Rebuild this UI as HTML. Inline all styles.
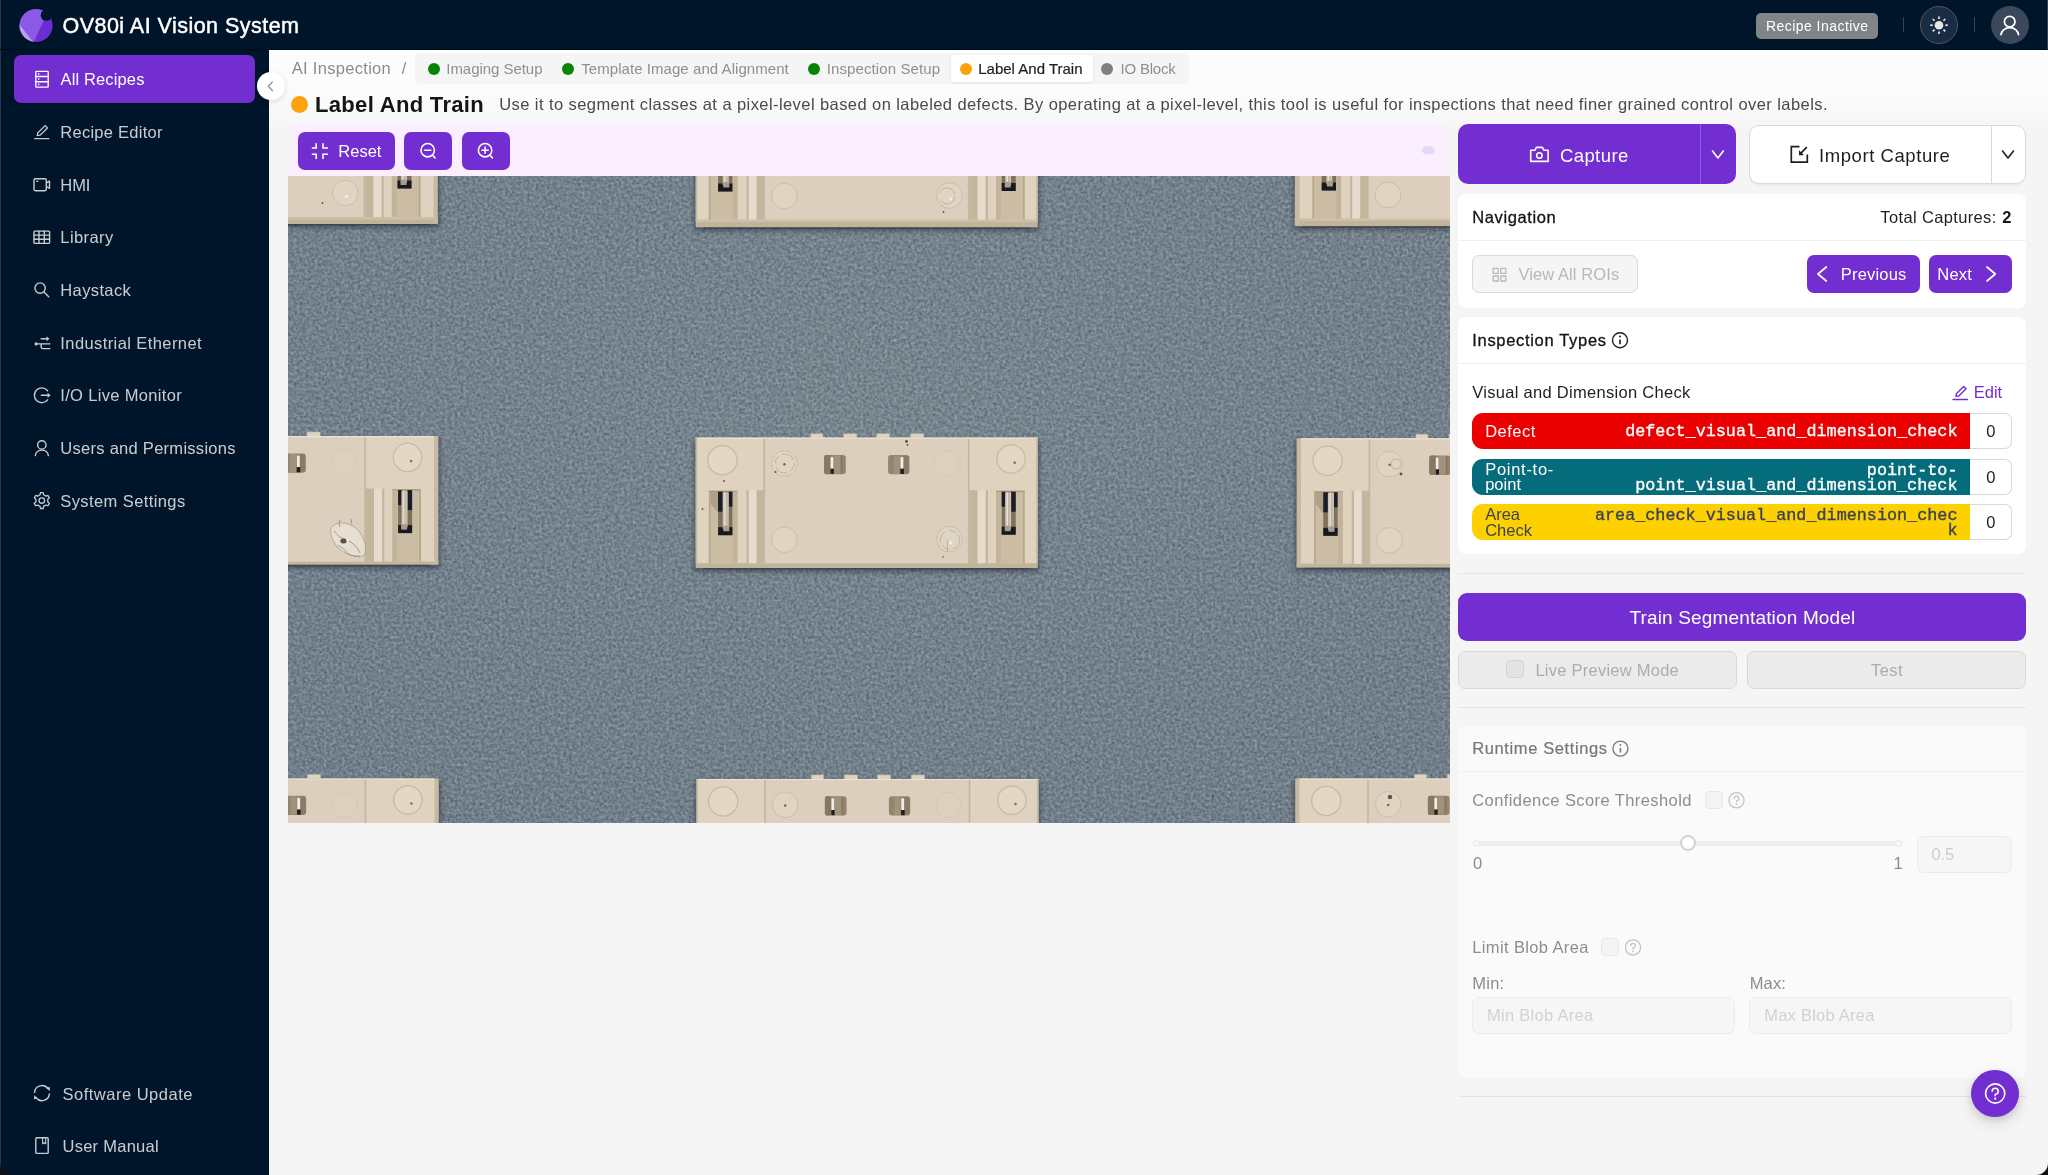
<!DOCTYPE html>
<html><head><meta charset="utf-8"><title>OV80i AI Vision System</title>
<style>
*{box-sizing:border-box;margin:0;padding:0}
html,body{width:2048px;height:1175px;overflow:hidden;background:#f5f5f5;font-family:"Liberation Sans",sans-serif}
.a{position:absolute}
.t{position:absolute;white-space:pre;line-height:1;font-family:"Liberation Sans",sans-serif}
.m{position:absolute;white-space:pre;line-height:1;font-family:"Liberation Mono",monospace}
.card{position:absolute;background:#fff;border-radius:8px}
.pbtn{position:absolute;background:#722ed1;border-radius:7px}
.dis{position:absolute;background:#ebebeb;border:1px solid #d9d9d9;border-radius:7px}
.cb{position:absolute;width:18px;height:18px;border-radius:4px;border:1px solid #d6d6d6;background:#e6e6e6}
.hr{position:absolute;height:1px;background:#e6e6e6}
</style></head><body>
<!-- page chrome -->
<div class="a" style="left:269px;top:50px;width:1779px;height:76px;background:linear-gradient(#fdfdfd,#fbfbfb 60%,#f6f6f6)"></div>
<div class="a" style="left:0;top:0;width:2048px;height:50px;background:#001529"></div>
<div class="a" style="left:0;top:50px;width:269px;height:1125px;background:#001529"></div>
<div class="a" style="left:0;top:0;width:1px;height:1175px;background:#27364a"></div>
<div class="a" style="left:0;top:49px;width:2048px;height:1px;background:#000a18"></div>
<div class="a" style="left:2047px;top:0;width:1px;height:49px;background:#334154"></div>
<!-- header widgets -->
<div class="a" style="left:1756px;top:13px;width:122px;height:26px;border-radius:5px;background:#808588"></div>
<div class="a" style="left:1903px;top:17px;width:1px;height:15px;background:#33445a"></div>
<div class="a" style="left:1974px;top:17px;width:1px;height:15px;background:#33445a"></div>
<div class="a" style="left:1920px;top:6px;width:38px;height:38px;border-radius:50%;background:#182c44;border:1px solid #5c5450"></div>
<div class="a" style="left:1990.5px;top:6px;width:38px;height:38px;border-radius:50%;background:#3b485b"></div>
<!-- sidebar -->
<div class="a" style="left:14px;top:55px;width:241px;height:48px;border-radius:7px;background:#722ed1"></div>
<div class="a" style="left:256.5px;top:72px;width:28px;height:28px;border-radius:50%;background:#fff;box-shadow:0 2px 6px rgba(0,0,0,.12)"></div>
<!-- tabs -->
<div class="a" style="left:415px;top:53px;width:774px;height:31px;border-radius:6px;background:#f5f5f5"></div>
<div class="a" style="left:950.5px;top:55px;width:142px;height:26.5px;border-radius:4px;background:#fff;box-shadow:0 1px 3px rgba(0,0,0,.08)"></div>
<div class="a" style="left:427.5px;top:63px;width:12px;height:12px;border-radius:50%;background:#088408"></div>
<div class="a" style="left:562px;top:63px;width:12px;height:12px;border-radius:50%;background:#088408"></div>
<div class="a" style="left:808.2px;top:63px;width:12px;height:12px;border-radius:50%;background:#088408"></div>
<div class="a" style="left:959.7px;top:63px;width:12px;height:12px;border-radius:50%;background:#fba30f"></div>
<div class="a" style="left:1101.4px;top:63px;width:12px;height:12px;border-radius:50%;background:#808080"></div>
<div class="a" style="left:291.2px;top:95.7px;width:17px;height:17px;border-radius:50%;background:#fba30f"></div>
<!-- toolbar -->
<div class="a" style="left:291px;top:124.5px;width:1152px;height:52px;background:#faeeff"></div>
<div class="pbtn" style="left:298px;top:132px;width:96.6px;height:38px"></div>
<div class="pbtn" style="left:404px;top:132px;width:48px;height:38px"></div>
<div class="pbtn" style="left:461.6px;top:132px;width:48.2px;height:38px"></div>
<svg class="a" style="left:288px;top:176px" width="1162" height="647" viewBox="288 176 1162 647">
<defs>
<filter id="nz" x="0" y="0" width="100%" height="100%" color-interpolation-filters="sRGB"><feTurbulence type="fractalNoise" baseFrequency="0.36" numOctaves="2" seed="7" result="n"/><feColorMatrix in="n" type="matrix" values="0 0 0 0 0.18  0 0 0 0 0.22  0 0 0 0 0.27  1.7 0 0 0 -0.6"/></filter>
<filter id="nz2" x="0" y="0" width="100%" height="100%" color-interpolation-filters="sRGB"><feTurbulence type="fractalNoise" baseFrequency="0.33" numOctaves="2" seed="23" result="n"/><feColorMatrix in="n" type="matrix" values="0 0 0 0 0.78  0 0 0 0 0.82  0 0 0 0 0.85  1.7 0 0 0 -0.62"/></filter>
<radialGradient id="bgg" cx="0.5" cy="0.35" r="0.8"><stop offset="0" stop-color="#78868f"/><stop offset="1" stop-color="#6f7d89"/></radialGradient>
<linearGradient id="pin" x1="0" x2="1"><stop offset="0" stop-color="#c0b6a6"/><stop offset=".4" stop-color="#e6e0d5"/><stop offset=".58" stop-color="#bdb3a3"/><stop offset="1" stop-color="#d4cbbd"/></linearGradient>
<filter id="sh" x="-5%" y="-10%" width="110%" height="125%"><feGaussianBlur stdDeviation="2.2"/></filter>
<g id="part">
 <path d="M115 0v-4h12v4M148 0v-4h13v4M181 0v-4h13v4M215 0v-4h13v4" fill="#ded3c1" stroke="#c6b8a1" stroke-width=".6"/>
 <rect x="0" y="0" width="342" height="125.5" fill="#dfd3c0"/>
 <rect x="68.5" y="0.5" width="204.5" height="125" fill="#dccfbd"/>
 <path d="M68.5 0V125.5M273 0V125.5" stroke="#c3b59e" stroke-width="1.6" fill="none"/>
 <path d="M0 .5H342" stroke="#ebe3d5" stroke-width="1.2"/>
 <g fill="#e3d8c6" stroke="#c8baa3" stroke-width="1.3">
  <circle cx="26.7" cy="22.5" r="14.6"/><circle cx="315.4" cy="21.3" r="14.2"/>
 </g>
 <g fill="#e0d4c3" stroke="#ccbfa9" stroke-width="1">
  <circle cx="88.7" cy="25.8" r="12.8"/><circle cx="88.7" cy="102" r="12.8"/><circle cx="253.8" cy="101.5" r="12.8"/><circle cx="252" cy="26" r="12.8" stroke="#d6cab7" fill="#ddd0bf"/>
 </g>
 <circle cx="88.7" cy="26.5" r="1.2" fill="#6d6253"/><circle cx="255" cy="105" r="1.6" fill="#f4efe6"/><circle cx="319" cy="25" r="1.3" fill="#7d7160"/>
 <g>
  <rect x="128.4" y="17.3" width="21.7" height="19.3" rx="3" fill="#94856e"/><rect x="128.4" y="17.3" width="6.4" height="19.3" rx="2" fill="#877862"/><rect x="138" y="18" width="7" height="18" fill="#a1927b"/><rect x="145" y="18" width="1.6" height="18" fill="#85765f"/>
  <rect x="134.9" y="19.3" width="2.7" height="12" rx="1" fill="#f4ede2"/><rect x="134.9" y="31" width="3.2" height="5.2" fill="#1c1e24"/>
  <rect x="192.4" y="17.3" width="21.3" height="19.3" rx="3" fill="#94856e"/><rect x="198" y="18" width="6" height="18" fill="#a1927b"/><rect x="208" y="18" width="5" height="18" rx="2" fill="#8a7b65"/>
  <rect x="204.8" y="19.3" width="2.8" height="12" rx="1" fill="#f4ede2"/><rect x="204.6" y="31" width="3.6" height="5.2" fill="#1c1e24"/>
 </g>
 <!-- left slot -->
 <rect x="13.2" y="53" width="28.6" height="72.5" fill="#cbbca4"/><rect x="13.2" y="53" width="28.6" height="1.4" fill="#a8977e"/><rect x="13.2" y="53" width="1.6" height="72.5" fill="#b5a58c"/>
 <path d="M14.8 54.4H22.4V75L14.8 66Z" fill="#a9987f" opacity=".8"/>
 <rect x="37" y="54" width="4.8" height="71.5" fill="#c3b39b"/>
 <rect x="22.4" y="54" width="14.3" height="43.5" fill="#7f705a"/>
 <rect x="22.4" y="54" width="4.6" height="20" fill="#1b1e28"/><rect x="33" y="54" width="3.7" height="15" fill="#1b1e28"/><rect x="22.4" y="89.5" width="14.3" height="8" fill="#171922"/>
 <rect x="27" y="54.5" width="6" height="37" rx="1.2" fill="url(#pin)"/><rect x="27.6" y="88" width="6" height="5.5" fill="#a99c88"/>
 <!-- ribs -->
 <rect x="50.8" y="52.5" width="2.3" height="73" fill="#c5b69f"/><rect x="53.1" y="52.5" width="7.8" height="73" rx="1" fill="#e6dccd"/><rect x="60.9" y="52.5" width="7.2" height="73" fill="#c4b59d"/>
 <rect x="273.8" y="52.5" width="8.2" height="73" fill="#c4b59d"/><rect x="282" y="52.5" width="8" height="73" rx="1" fill="#e6dccd"/><rect x="290" y="52.5" width="2.3" height="73" fill="#c5b69f"/>
 <!-- right slot -->
 <rect x="300.3" y="53" width="28.6" height="72.5" fill="#cbbca4"/><rect x="300.3" y="53" width="28.6" height="1.4" fill="#a8977e"/><rect x="327.3" y="53" width="1.6" height="72.5" fill="#b5a58c"/>
 <rect x="300.3" y="54" width="4.8" height="71.5" fill="#c3b39b"/>
 <rect x="306" y="54" width="14" height="43" fill="#7f705a"/>
 <rect x="306" y="54" width="3.4" height="15" fill="#1b1e28"/><rect x="315.4" y="54" width="4.6" height="20" fill="#1b1e28"/><rect x="306" y="89" width="14" height="8" fill="#171922"/>
 <rect x="309.4" y="54.5" width="6" height="37" rx="1.2" fill="url(#pin)"/><rect x="309" y="88" width="6" height="5.5" fill="#a99c88"/>
</g>
<clipPath id="pc"><rect x="288" y="176" width="1162" height="647"/></clipPath>
</defs>
<rect x="288" y="176" width="1162" height="647" fill="url(#bgg)"/>
<rect x="288" y="176" width="1162" height="647" filter="url(#nz)" opacity=".5"/>
<rect x="288" y="176" width="1162" height="647" filter="url(#nz2)" opacity=".45"/>
<g clip-path="url(#pc)">
<rect x="89.5" y="93.5" width="350.3" height="134.5" fill="#2b3642" opacity=".55" filter="url(#sh)"/>
<rect x="91.5" y="216.5" width="346.3" height="7.5" fill="#c2b39b"/>
<rect x="91.5" y="217.0" width="346.3" height="2.6" fill="#cdbfa8"/>
<rect x="433.0" y="91.5" width="4.8" height="131.5" fill="#c8b9a1"/>
<use href="#part" x="91.5" y="91.5"/>
<rect x="91.5" y="91.5" width="1.6" height="125.5" fill="#c7baa3"/>
<rect x="99.5" y="224.0" width="330.3" height="1.5" fill="#2c333b" opacity=".5"/>
<rect x="693.7" y="96" width="346.0" height="135.3" fill="#2b3642" opacity=".55" filter="url(#sh)"/>
<rect x="695.7" y="219.0" width="342.0" height="8.3" fill="#c2b39b"/>
<rect x="695.7" y="219.5" width="342.0" height="2.6" fill="#cdbfa8"/>
<use href="#part" x="695.7" y="94"/>
<rect x="695.7" y="94" width="1.6" height="125.5" fill="#c7baa3"/>
<rect x="1036.1" y="94" width="1.6" height="125.5" fill="#c7baa3"/>
<rect x="703.7" y="227.3" width="326.0" height="1.5" fill="#2c333b" opacity=".5"/>
<rect x="1292.8" y="95" width="350.5" height="135.2" fill="#2b3642" opacity=".55" filter="url(#sh)"/>
<rect x="1294.8" y="218.0" width="346.5" height="8.2" fill="#c2b39b"/>
<rect x="1294.8" y="218.5" width="346.5" height="2.6" fill="#cdbfa8"/>
<rect x="1294.8" y="93" width="5.0" height="132.2" fill="#c8b9a1"/>
<use href="#part" x="1299.3" y="93"/>
<rect x="1639.6999999999998" y="93" width="1.6" height="125.5" fill="#c7baa3"/>
<rect x="1302.8" y="226.2" width="330.5" height="1.5" fill="#2c333b" opacity=".5"/>
<rect x="90.1" y="438.1" width="350.30000000000007" height="130.70000000000005" fill="#2b3642" opacity=".55" filter="url(#sh)"/>
<rect x="92.1" y="561.1" width="346.30000000000007" height="3.7" fill="#c2b39b"/>
<rect x="433.6" y="436.1" width="4.8" height="127.69999999999999" fill="#c8b9a1"/>
<use href="#part" x="92.1" y="436.1"/>
<rect x="92.1" y="436.1" width="1.6" height="125.5" fill="#c7baa3"/>
<rect x="100.1" y="564.8000000000001" width="330.30000000000007" height="1.5" fill="#2c333b" opacity=".5"/>
<rect x="693.7" y="439.7" width="346.0" height="132.3" fill="#2b3642" opacity=".55" filter="url(#sh)"/>
<rect x="695.7" y="562.7" width="342.0" height="5.3" fill="#c2b39b"/>
<use href="#part" x="695.7" y="437.7"/>
<rect x="695.7" y="437.7" width="1.6" height="125.5" fill="#c7baa3"/>
<rect x="1036.1" y="437.7" width="1.6" height="125.5" fill="#c7baa3"/>
<rect x="703.7" y="568.0" width="326.0" height="1.5" fill="#2c333b" opacity=".5"/>
<rect x="1294.6000000000001" y="440.3" width="350.29999999999995" height="131.39999999999992" fill="#2b3642" opacity=".55" filter="url(#sh)"/>
<rect x="1296.6000000000001" y="563.3" width="346.29999999999995" height="4.4" fill="#c2b39b"/>
<rect x="1296.6000000000001" y="438.3" width="4.8" height="128.4" fill="#c8b9a1"/>
<use href="#part" x="1300.9" y="438.3"/>
<rect x="1641.3000000000002" y="438.3" width="1.6" height="125.5" fill="#c7baa3"/>
<rect x="1304.6000000000001" y="567.6999999999999" width="330.29999999999995" height="1.5" fill="#2c333b" opacity=".5"/>
<rect x="90.5" y="780.5" width="350.3" height="131.5" fill="#2b3642" opacity=".55" filter="url(#sh)"/>
<rect x="92.5" y="903.5" width="346.3" height="4.5" fill="#c2b39b"/>
<rect x="434.0" y="778.5" width="4.8" height="128.5" fill="#c8b9a1"/>
<use href="#part" x="92.5" y="778.5"/>
<rect x="92.5" y="778.5" width="1.6" height="125.5" fill="#c7baa3"/>
<rect x="100.5" y="908.0" width="330.3" height="1.5" fill="#2c333b" opacity=".5"/>
<rect x="694.5" y="781" width="346.0" height="131.5" fill="#2b3642" opacity=".55" filter="url(#sh)"/>
<rect x="696.5" y="904.0" width="342.0" height="4.5" fill="#c2b39b"/>
<use href="#part" x="696.5" y="779"/>
<rect x="696.5" y="779" width="1.6" height="125.5" fill="#c7baa3"/>
<rect x="1036.9" y="779" width="1.6" height="125.5" fill="#c7baa3"/>
<rect x="704.5" y="908.5" width="326.0" height="1.5" fill="#2c333b" opacity=".5"/>
<rect x="1293.2" y="780.5" width="350.29999999999995" height="131.5" fill="#2b3642" opacity=".55" filter="url(#sh)"/>
<rect x="1295.2" y="903.5" width="346.29999999999995" height="4.5" fill="#c2b39b"/>
<rect x="1295.2" y="778.5" width="4.8" height="128.5" fill="#c8b9a1"/>
<use href="#part" x="1299.5" y="778.5"/>
<rect x="1639.9" y="778.5" width="1.6" height="125.5" fill="#c7baa3"/>
<rect x="1303.2" y="908.0" width="330.29999999999995" height="1.5" fill="#2c333b" opacity=".5"/>
<g><path d="M331 527q8-6 17-3q10 3 14 12q5 9 3 18q-6 5-14 1q-9-2-15-10q-7-9-5-18z" fill="#e8e1d5" fill-opacity=".85" stroke="#7d7364" stroke-width=".8" stroke-opacity=".5"/><path d="M334 531q5 7 13 9q9 4 13 13M340 527q-2-4 0-7M351 524q1-3 0-5M338 545q6 3 10 9q6 3 12 2" fill="none" stroke="#6f6557" stroke-width=".8" opacity=".7"/><ellipse cx="343.5" cy="541" rx="3.2" ry="2.5" fill="#5a5145"/><circle cx="347.5" cy="540.3" r="1.2" fill="#f5f1e9"/></g>
<g fill="#5c5346"><circle cx="906.5" cy="441.5" r="1.4"/><circle cx="907.5" cy="445" r=".9"/><circle cx="724" cy="481" r=".9"/><circle cx="702.5" cy="509" r=".9"/><circle cx="943" cy="557" r=".8"/><circle cx="775.5" cy="472" r="1"/><circle cx="1401" cy="474" r="1.4"/><circle cx="322.5" cy="203" r=".9"/><circle cx="943.5" cy="212" r=".9"/><circle cx="1213" cy="796" r="1.2"/><circle cx="1390" cy="797" r="2.2"/></g>
<g fill="none" stroke="#8c806d" stroke-width=".8" opacity=".5"><circle cx="784.5" cy="463.5" r="9.5" stroke-dasharray="9 3 14 4"/><circle cx="950" cy="540" r="9.5" stroke-dasharray="12 4 8 3"/><circle cx="1396" cy="464" r="5" /><circle cx="947" cy="196" r="8" stroke-dasharray="20 8"/><path d="M947.5 540v12"/></g>
</g></svg>
<!-- right panel -->
<div class="pbtn" style="left:1457.6px;top:124.3px;width:278.3px;height:60px;border-radius:10px"></div>
<div class="a" style="left:1699.5px;top:124.3px;width:1px;height:60px;background:#8f58dd"></div>
<div class="a" style="left:1748.5px;top:124.5px;width:277.5px;height:59.5px;border-radius:10px;background:#fff;border:1px solid #d9d9d9;box-shadow:0 2px 0 rgba(0,0,0,.03)"></div>
<div class="a" style="left:1991px;top:125px;width:1px;height:58.5px;background:#d9d9d9"></div>
<div class="card" style="left:1457.6px;top:193.5px;width:568.8px;height:114px"></div>
<div class="hr" style="left:1457.6px;top:240px;width:568.8px;background:#f0f0f0"></div>
<div class="a" style="left:1472.3px;top:255.2px;width:165.7px;height:37.8px;border-radius:7px;background:#f5f5f5;border:1px solid #d9d9d9"></div>
<div class="pbtn" style="left:1806.9px;top:255.2px;width:113px;height:37.8px"></div>
<div class="pbtn" style="left:1929.3px;top:255.2px;width:82.9px;height:37.8px"></div>
<div class="card" style="left:1457.6px;top:317.4px;width:568.8px;height:236.5px"></div>
<div class="hr" style="left:1457.6px;top:363px;width:568.8px;background:#f0f0f0"></div>
<div class="a" style="left:1472px;top:413px;width:498px;height:36px;border-radius:11px 0 0 11px;background:#ea0000"></div>
<div class="a" style="left:1472px;top:458.6px;width:498px;height:36.2px;border-radius:11px 0 0 11px;background:#046c7b"></div>
<div class="a" style="left:1472px;top:504px;width:498px;height:36px;border-radius:11px 0 0 11px;background:#fdd000"></div>
<div class="a" style="left:1969.5px;top:413px;width:42.7px;height:36px;border-radius:0 7px 7px 0;background:#fff;border:1px solid #d9d9d9;border-left:none"></div>
<div class="a" style="left:1969.5px;top:458.6px;width:42.7px;height:36.2px;border-radius:0 7px 7px 0;background:#fff;border:1px solid #d9d9d9;border-left:none"></div>
<div class="a" style="left:1969.5px;top:504px;width:42.7px;height:36px;border-radius:0 7px 7px 0;background:#fff;border:1px solid #d9d9d9;border-left:none"></div>
<div class="hr" style="left:1457.6px;top:572.5px;width:568.8px"></div>
<div class="pbtn" style="left:1457.6px;top:593px;width:568.8px;height:47.6px;border-radius:9px"></div>
<div class="dis" style="left:1458px;top:650.5px;width:279px;height:38.2px"></div>
<div class="dis" style="left:1747px;top:650.5px;width:279.3px;height:38.2px"></div>
<div class="cb" style="left:1506.4px;top:660.3px;background:#e3e3e3;border-color:#d4d4d4"></div>
<div class="hr" style="left:1457.6px;top:707px;width:568.8px"></div>
<div class="card" style="left:1457.6px;top:725.8px;width:568.8px;height:351.8px;background:#fafafa"></div>
<div class="hr" style="left:1457.6px;top:771.3px;width:568.8px;background:#f1f1f1"></div>
<div class="cb" style="left:1704.6px;top:791.2px;background:#f4f4f4;border-color:#e8e8e8"></div>
<div class="cb" style="left:1601.2px;top:938.3px;background:#f4f4f4;border-color:#e8e8e8"></div>
<div class="a" style="left:1474px;top:841px;width:428px;height:5px;border-radius:3px;background:#ededed"></div>
<div class="a" style="left:1680px;top:835.3px;width:16px;height:16px;border-radius:50%;background:#fff;border:2.5px solid #d3d3d3"></div>
<div class="a" style="left:1916.5px;top:835.7px;width:95.7px;height:37.8px;border-radius:7px;background:#f6f6f6;border:1px solid #ebebeb"></div>
<div class="a" style="left:1472.3px;top:996.9px;width:262.6px;height:37.6px;border-radius:7px;background:#f6f6f6;border:1px solid #ebebeb"></div>
<div class="a" style="left:1749.4px;top:996.9px;width:262.6px;height:37.6px;border-radius:7px;background:#f6f6f6;border:1px solid #ebebeb"></div>
<div class="hr" style="left:1457.6px;top:1096px;width:568.8px;background:#e4e4e4"></div>
<div class="a" style="left:1971.4px;top:1069.7px;width:47.6px;height:47.6px;border-radius:50%;background:#722ed1;box-shadow:0 6px 16px rgba(0,0,0,.12),0 3px 6px rgba(0,0,0,.1)"></div>
<div class="a" style="left:0;top:0;width:2048px;height:1175px;will-change:transform">
<div class="t" style="left:62.50px;top:16px;font-size:21.5px;font-weight:400;color:#fff;letter-spacing:0.469px;-webkit-text-stroke:0.45px #fff;">OV80i AI Vision System</div>
<div class="t" style="left:1765.90px;top:19px;font-size:14px;font-weight:400;color:#fff;letter-spacing:0.463px;">Recipe Inactive</div>
<div class="t" style="left:60.50px;top:71px;font-size:16.5px;font-weight:400;color:#fff;letter-spacing:0.135px;">All Recipes</div>
<div class="t" style="left:60.30px;top:124px;font-size:16.5px;font-weight:400;color:rgba(255,255,255,0.78);letter-spacing:0.261px;">Recipe Editor</div>
<div class="t" style="left:60.30px;top:177px;font-size:16.5px;font-weight:400;color:rgba(255,255,255,0.78);letter-spacing:-0.075px;">HMI</div>
<div class="t" style="left:60.30px;top:229px;font-size:16.5px;font-weight:400;color:rgba(255,255,255,0.78);letter-spacing:0.410px;">Library</div>
<div class="t" style="left:60.30px;top:282px;font-size:16.5px;font-weight:400;color:rgba(255,255,255,0.78);letter-spacing:0.377px;">Haystack</div>
<div class="t" style="left:60.30px;top:335px;font-size:16.5px;font-weight:400;color:rgba(255,255,255,0.78);letter-spacing:0.410px;">Industrial Ethernet</div>
<div class="t" style="left:60.30px;top:387px;font-size:16.5px;font-weight:400;color:rgba(255,255,255,0.78);letter-spacing:0.329px;">I/O Live Monitor</div>
<div class="t" style="left:60.30px;top:440px;font-size:16.5px;font-weight:400;color:rgba(255,255,255,0.78);letter-spacing:0.278px;">Users and Permissions</div>
<div class="t" style="left:60.30px;top:493px;font-size:16.5px;font-weight:400;color:rgba(255,255,255,0.78);letter-spacing:0.406px;">System Settings</div>
<div class="t" style="left:62.50px;top:1086px;font-size:16.5px;font-weight:400;color:rgba(255,255,255,0.78);letter-spacing:0.500px;">Software Update</div>
<div class="t" style="left:62.50px;top:1138px;font-size:16.5px;font-weight:400;color:rgba(255,255,255,0.78);letter-spacing:0.255px;">User Manual</div>
<div class="t" style="left:291.75px;top:60px;font-size:16.5px;font-weight:400;color:#8c8c8c;letter-spacing:0.301px;">AI Inspection</div>
<div class="t" style="left:401.70px;top:60px;font-size:16.5px;font-weight:400;color:#8c8c8c;letter-spacing:0.000px;">/</div>
<div class="t" style="left:446.25px;top:61px;font-size:15px;font-weight:400;color:#8f8f8f;letter-spacing:-0.040px;">Imaging Setup</div>
<div class="t" style="left:581.25px;top:61px;font-size:15px;font-weight:400;color:#8f8f8f;letter-spacing:0.057px;">Template Image and Alignment</div>
<div class="t" style="left:826.75px;top:61px;font-size:15px;font-weight:400;color:#8f8f8f;letter-spacing:0.100px;">Inspection Setup</div>
<div class="t" style="left:978.25px;top:61px;font-size:15px;font-weight:400;color:#1f1f1f;letter-spacing:0.000px;-webkit-text-stroke:0.2px #1f1f1f;">Label And Train</div>
<div class="t" style="left:1120.50px;top:61px;font-size:15px;font-weight:400;color:#8f8f8f;letter-spacing:-0.205px;">IO Block</div>
<div class="t" style="left:315.00px;top:94px;font-size:22px;font-weight:700;color:#141414;letter-spacing:0.324px;">Label And Train</div>
<div class="t" style="left:499.25px;top:96px;font-size:16.5px;font-weight:400;color:#4a4a4a;letter-spacing:0.421px;">Use it to segment classes at a pixel-level based on labeled defects. By operating at a pixel-level, this tool is useful for inspections that need finer grained control over labels.</div>
<div class="t" style="left:338.30px;top:143px;font-size:16.5px;font-weight:400;color:#fff;letter-spacing:-0.002px;">Reset</div>
<div class="t" style="left:1559.90px;top:147px;font-size:18.5px;font-weight:400;color:#fff;letter-spacing:0.429px;">Capture</div>
<div class="t" style="left:1819.10px;top:147px;font-size:18.5px;font-weight:400;color:#1f1f1f;letter-spacing:0.562px;">Import Capture</div>
<div class="t" style="left:1472.30px;top:209px;font-size:16.5px;font-weight:400;color:#141414;letter-spacing:0.615px;-webkit-text-stroke:0.3px #141414;">Navigation</div>
<div class="t" style="left:1880.30px;top:209px;font-size:16.5px;font-weight:400;color:#1f1f1f;letter-spacing:0.358px;">Total Captures:</div>
<div class="t" style="left:2002.36px;top:209px;font-size:16.5px;font-weight:700;color:#141414;letter-spacing:0.000px;">2</div>
<div class="t" style="left:1518.40px;top:266px;font-size:16.5px;font-weight:400;color:#b8b8b8;letter-spacing:0.095px;">View All ROIs</div>
<div class="t" style="left:1840.80px;top:266px;font-size:16.5px;font-weight:400;color:#fff;letter-spacing:0.185px;">Previous</div>
<div class="t" style="left:1937.30px;top:266px;font-size:16.5px;font-weight:400;color:#fff;letter-spacing:0.221px;">Next</div>
<div class="t" style="left:1472.30px;top:332px;font-size:16.5px;font-weight:400;color:#141414;letter-spacing:0.678px;-webkit-text-stroke:0.3px #141414;">Inspection Types</div>
<div class="t" style="left:1472.30px;top:384px;font-size:16.5px;font-weight:400;color:#1f1f1f;letter-spacing:0.290px;">Visual and Dimension Check</div>
<div class="t" style="left:1973.80px;top:384px;font-size:16.5px;font-weight:400;color:#722ed1;letter-spacing:-0.012px;">Edit</div>
<div class="t" style="left:1485.20px;top:423px;font-size:16.5px;font-weight:400;color:#fff;letter-spacing:0.503px;">Defect</div>
<div class="t" style="left:1485.20px;top:461px;font-size:16.5px;font-weight:400;color:#fff;letter-spacing:0.718px;">Point-to-</div>
<div class="t" style="left:1485.20px;top:476px;font-size:16.5px;font-weight:400;color:#fff;letter-spacing:0.000px;">point</div>
<div class="t" style="left:1485.20px;top:506px;font-size:16.5px;font-weight:400;color:#3b4252;letter-spacing:0.000px;">Area</div>
<div class="t" style="left:1485.20px;top:522px;font-size:16.5px;font-weight:400;color:#3b4252;letter-spacing:0.000px;">Check</div>
<div class="t" style="left:1986.21px;top:423px;font-size:16.5px;font-weight:400;color:#1f1f1f;letter-spacing:0.000px;">0</div>
<div class="t" style="left:1986.21px;top:469px;font-size:16.5px;font-weight:400;color:#1f1f1f;letter-spacing:0.000px;">0</div>
<div class="t" style="left:1986.21px;top:514px;font-size:16.5px;font-weight:400;color:#1f1f1f;letter-spacing:0.000px;">0</div>
<div class="t" style="left:1629.40px;top:608px;font-size:19px;font-weight:400;color:#fff;letter-spacing:0.163px;">Train Segmentation Model</div>
<div class="t" style="left:1535.40px;top:662px;font-size:16.5px;font-weight:400;color:#a8adb0;letter-spacing:0.250px;">Live Preview Mode</div>
<div class="t" style="left:1871.10px;top:662px;font-size:16.5px;font-weight:400;color:#a8adb0;letter-spacing:0.411px;">Test</div>
<div class="t" style="left:1472.30px;top:740px;font-size:16.5px;font-weight:400;color:#73787c;letter-spacing:0.603px;-webkit-text-stroke:0.2px #73787c;">Runtime Settings</div>
<div class="t" style="left:1472.30px;top:792px;font-size:16.5px;font-weight:400;color:#8a8e92;letter-spacing:0.411px;">Confidence Score Threshold</div>
<div class="t" style="left:1473.11px;top:855px;font-size:16.5px;font-weight:400;color:#8a8e92;letter-spacing:0.000px;">0</div>
<div class="t" style="left:1893.61px;top:855px;font-size:16.5px;font-weight:400;color:#8a8e92;letter-spacing:0.000px;">1</div>
<div class="t" style="left:1931.60px;top:846px;font-size:16.5px;font-weight:400;color:#cdcdcd;letter-spacing:-0.169px;">0.5</div>
<div class="t" style="left:1472.30px;top:939px;font-size:16.5px;font-weight:400;color:#8a8e92;letter-spacing:0.365px;">Limit Blob Area</div>
<div class="t" style="left:1472.30px;top:975px;font-size:16.5px;font-weight:400;color:#8a8e92;letter-spacing:0.243px;">Min:</div>
<div class="t" style="left:1749.70px;top:975px;font-size:16.5px;font-weight:400;color:#8a8e92;letter-spacing:0.145px;">Max:</div>
<div class="t" style="left:1486.90px;top:1007px;font-size:16.5px;font-weight:400;color:#d2d2d2;letter-spacing:0.305px;">Min Blob Area</div>
<div class="t" style="left:1764.20px;top:1007px;font-size:16.5px;font-weight:400;color:#d2d2d2;letter-spacing:0.241px;">Max Blob Area</div>
<div class="m" style="left:1625.17px;top:424px;font-size:16.8px;color:#fff;-webkit-text-stroke:0.35px #fff">defect_visual_and_dimension_check</div>
<div class="m" style="left:1866.86px;top:463px;font-size:16.8px;color:#fff;-webkit-text-stroke:0.35px #fff">point-to-</div>
<div class="m" style="left:1635.23px;top:478px;font-size:16.8px;color:#fff;-webkit-text-stroke:0.35px #fff">point_visual_and_dimension_check</div>
<div class="m" style="left:1594.95px;top:508px;font-size:16.8px;color:#3b4252;-webkit-text-stroke:0.35px #3b4252">area_check_visual_and_dimension_chec</div>
<div class="m" style="left:1947.42px;top:523px;font-size:16.8px;color:#3b4252;-webkit-text-stroke:0.35px #3b4252">k</div>
</div>
<svg class="a" style="left:0;top:0;pointer-events:none" width="2048" height="1175" viewBox="0 0 2048 1175" fill="none" stroke-linecap="round" stroke-linejoin="round">
<defs><clipPath id="lg"><circle cx="36" cy="25.5" r="16.6"/></clipPath><mask id="lgm"><rect x="0" y="0" width="80" height="60" fill="#fff"/><circle cx="46.3" cy="15.2" r="5.6" fill="#000"/></mask></defs>
<g clip-path="url(#lg)" mask="url(#lgm)"><rect x="19" y="8" width="34" height="36" fill="#8a5ae6"/><path d="M18 22.5 L33.6 42.5 L18 46Z" fill="#b9a0f1"/><path d="M48.5 10 L33.2 43.5 L56 46 L56 10Z" fill="#6a2dd6"/></g>
<g stroke="#fff" stroke-width="1.35"><rect x="35.8" y="71.3" width="12.4" height="15.8" rx=".6"/><path d="M35.8 76.5H48.2M35.8 81.7H48.2"/></g><g fill="#fff"><circle cx="38.7" cy="73.9" r=".8"/><circle cx="38.7" cy="79.1" r=".8"/><circle cx="38.7" cy="84.4" r=".8"/></g>
<g stroke="#c7ccd1" stroke-width="1.4">
<path d="M34.6 138.6H48.8" stroke-width="1.25"/><path d="M37.3 135.5L37.8 132.8L45.2 125.6L47.5 127.9L40.1 135.1Z" stroke-linejoin="miter" stroke-width="1.3"/>
<rect x="34" y="178.7" width="12.3" height="12" rx="1.4"/><path d="M46.6 182.8L49.5 181V188.3L46.6 186.5"/>
<rect x="34" y="231.1" width="15.6" height="12.3" rx=".8"/><path d="M34 235.1H49.6M34 239.3H49.6M39 231.1V243.4M44.3 231.1V243.4"/>
<circle cx="40.1" cy="288.1" r="5.2"/><path d="M44 292.1L48.7 296.7"/>
<path d="M36 343.9H49.9M41.2 343.9V347.2Q41.2 348.6 42.6 348.6H49.9M41.2 338.7H47.5"/>
<path d="M47.63 399.86 A7.4 7.4 0 1 1 47.63 390.74"/>
<path d="M41.3 395.3H47.8"/>
<circle cx="41.83" cy="444.9" r="4.2"/><path d="M35.3 455.6A6.6 6.3 0 0 1 48.4 455.6"/>
<path d="M43.61 494.77 L43.22 492.72 L40.44 492.72 L40.05 494.77 L37.67 496.14 L35.70 495.46 L34.31 497.86 L35.89 499.23 L35.89 501.97 L34.31 503.34 L35.70 505.74 L37.67 505.06 L40.05 506.43 L40.44 508.48 L43.22 508.48 L43.61 506.43 L45.99 505.06 L47.96 505.74 L49.35 503.34 L47.77 501.97 L47.77 499.23 L49.35 497.86 L47.96 495.46 L45.99 496.14Z" stroke-width="1.3"/><circle cx="41.83" cy="500.6" r="2.8" stroke-width="1.3"/>
<path d="M34.51 1092.32 A7.5 7.5 0 0 1 47.88 1088.48"/>
<path d="M49.43 1093.88 A7.5 7.5 0 0 1 36.06 1097.72"/>
<rect x="35.8" y="1137.8" width="12.4" height="15.6" rx="1"/><path d="M42.6 1137.8V1143.8L44.2 1142.6L45.7 1143.8V1137.8" stroke-width="1.1"/>
</g>
<g fill="#c7ccd1"><circle cx="36.1" cy="343.9" r="1.55"/><path d="M46.6 336.2L49.4 338.7L46.6 341.2Z"/><path d="M47.6 392.7L50.6 395.3L47.6 397.9Z"/><rect x="36.3" y="180.6" width="2" height="1.4"/><path d="M46.3 1087.9L50 1087L49.6 1090.9Z"/><path d="M37.6 1098.3L33.9 1099.2L34.3 1095.3Z"/></g>
<path d="M272.3 82L268.3 86.3L272.3 90.6" stroke="#9a9a9a" stroke-width="1.5"/>
<g stroke="#e6e6e6" stroke-width="1.7" stroke-linecap="butt">
<path d="M1945.30 25.20L1947.80 25.20"/>
<path d="M1943.45 29.65L1945.22 31.42"/>
<path d="M1939.00 31.50L1939.00 34.00"/>
<path d="M1934.55 29.65L1932.78 31.42"/>
<path d="M1932.70 25.20L1930.20 25.20"/>
<path d="M1934.55 20.75L1932.78 18.98"/>
<path d="M1939.00 18.90L1939.00 16.40"/>
<path d="M1943.45 20.75L1945.22 18.98"/>
</g><circle cx="1939" cy="25.2" r="4.3" fill="#e6e6e6"/>
<g stroke="#fff" stroke-width="1.8"><circle cx="2009.7" cy="21.6" r="5.3"/><path d="M2001 34.7A8.8 8 0 0 1 2018.5 34.7"/></g>
<g stroke="#fff" stroke-width="1.6" stroke-linecap="butt" stroke-linejoin="miter"><path d="M311.8 148H316.2V143.2M328 148H323V143.2M311.8 154.3H316.2V159.1M328 154.3H323V159.1"/></g>
<g stroke="#fff" stroke-width="1.6"><circle cx="427.7" cy="150.2" r="6.7"/><path d="M432.6 155.3L435 157.9M424.6 150.2H430.8"/><circle cx="485.1" cy="150.2" r="6.7"/><path d="M490 155.3L492.4 157.9M482 150.2H488.2M485.1 147.1V153.3"/></g>
<ellipse cx="1428.5" cy="150.3" rx="6.8" ry="4.3" fill="#e6d9f7"/>
<g stroke="#fff" stroke-width="1.6"><path d="M1530.7 150.2H1535L1536.4 147.4H1542.4L1543.8 150.2H1548.1V161.4H1530.7Z"/><circle cx="1539.4" cy="155.4" r="2.7"/></g>
<path d="M1712.5 151L1717.9 158L1723.3 151" stroke="#fff" stroke-width="1.6"/>
<path d="M2002.5 151L2008 158L2013.5 151" stroke="#1f1f1f" stroke-width="1.6"/>
<g stroke="#1f1f1f" stroke-width="1.7" stroke-linecap="butt" stroke-linejoin="miter"><path d="M1799.5 146.7H1791.3V162.2H1807.3V154.5M1806.8 147.2L1800.2 153.8"/></g><path d="M1799 150.2V155.2H1804Z" fill="#1f1f1f"/>
<g stroke="#b8b8b8" stroke-width="1.3"><rect x="1493.2" y="268.4" width="5" height="5"/><rect x="1500.8" y="268.4" width="5" height="5"/><rect x="1493.2" y="276" width="5" height="5"/><rect x="1500.8" y="276" width="5" height="5"/></g>
<g stroke="#fff" stroke-width="1.7"><path d="M1826.3 267L1818 274L1826.3 281"/><path d="M1987 267L1995.3 274L1987 281"/></g>
<g stroke="#1f1f1f" stroke-width="1.4"><circle cx="1620" cy="340.2" r="7.5"/><path d="M1620 339.5V344.2" stroke-width="1.6" stroke-linecap="butt"/></g><circle cx="1620" cy="336.6" r="1" fill="#1f1f1f"/>
<g stroke="#7a7e82" stroke-width="1.4"><circle cx="1620.4" cy="748.6" r="7.5"/><path d="M1620.4 747.9V752.6" stroke-width="1.6" stroke-linecap="butt"/></g><circle cx="1620.4" cy="745" r="1" fill="#7a7e82"/>
<g stroke="#722ed1" stroke-width="1.4"><path d="M1953 399.5H1967.5"/><path d="M1956 396.3L1956.5 393.6L1963.7 386.5L1966 388.8L1958.8 396Z" stroke-linejoin="miter"/></g>
<g stroke="#c4c4c4" stroke-width="1.3"><circle cx="1736.5" cy="800.3" r="7.6"/><path d="M1734.2 798.5A2.3 2.3 0 1 1 1736.5 800.8V801.9"/></g><circle cx="1736.5" cy="804.1999999999999" r=".9" fill="#c4c4c4"/>
<g stroke="#c4c4c4" stroke-width="1.3"><circle cx="1633" cy="947.4" r="7.6"/><path d="M1630.7 945.6A2.3 2.3 0 1 1 1633 947.9V949.0"/></g><circle cx="1633" cy="951.3" r=".9" fill="#c4c4c4"/>
<circle cx="1476" cy="843.4" r="2.6" fill="#fafafa" stroke="#ededed" stroke-width="1.4"/><circle cx="1898.5" cy="843.4" r="2.6" fill="#fafafa" stroke="#ededed" stroke-width="1.4"/>
<g stroke="#fff" stroke-width="1.6"><circle cx="1995.2" cy="1093.5" r="9.6"/><path d="M1992.2 1091.2A3 3 0 1 1 1995.2 1094.2V1095.8"/></g><circle cx="1995.2" cy="1098.7" r="1.1" fill="#fff"/>
</svg>
<!-- window corners -->
<svg class="a" style="left:0;top:1163px" width="12" height="12" viewBox="0 0 12 12"><path d="M0 0 V12 H12 A12 12 0 0 1 0 0Z" fill="#111"/></svg>
<svg class="a" style="left:2036px;top:1163px" width="12" height="12" viewBox="0 0 12 12"><path d="M12 0 V12 H0 A12 12 0 0 0 12 0Z" fill="#111"/></svg>
</body></html>
